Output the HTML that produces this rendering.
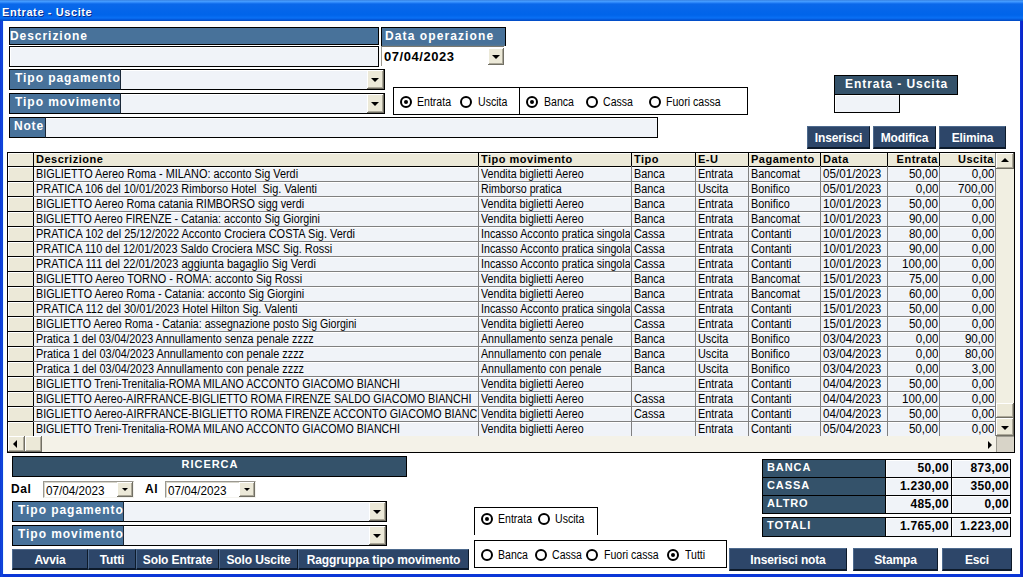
<!DOCTYPE html>
<html><head><meta charset="utf-8">
<style>
*{margin:0;padding:0;box-sizing:border-box}
html,body{width:1023px;height:577px;overflow:hidden;background:#fff;font-family:"Liberation Sans",sans-serif}
.a{position:absolute}
#win{position:absolute;left:0;top:0;width:1023px;height:577px;background:linear-gradient(90deg,#0a3ad6 0,#1448dc 2px,#0a36d6 3px,#0a36d6 1020px,#0d2cd0 1021px,#0a22c8 1023px)}
#title{position:absolute;left:0;top:0;width:1023px;height:21px;background:linear-gradient(#2f74d8 0px,#4aa2ff 1px,#3a92ff 2px,#0a68ea 4px,#0064ea 15px,#0a70f4 18px,#0660e4 19px,#0048c0 21px)}
#title span{position:absolute;left:2px;top:6px;color:#fff;font-weight:bold;font-size:11px;letter-spacing:0.6px;text-shadow:1px 1px 0 #0a2a8a}
#client{position:absolute;left:3px;top:21px;width:1017px;height:553px;background:#fff;border-left:1px solid #e4fbff}
.lbl{position:absolute;background:#48729a;border:1px solid #000;color:#fff;font-weight:bold;font-size:12px;letter-spacing:0.8px;white-space:nowrap;overflow:hidden}
.lbl span{position:absolute;left:4px;top:2px}
.dk{background:#34526a}
.inp{position:absolute;background:#f0f3f8;border:1px solid #000;box-shadow:inset 1px 1px 0 #fff}
.dd{position:absolute;background:#ece9d8;border-right:1px solid #716f64;border-bottom:1px solid #716f64;box-shadow:inset 1px 1px 0 #fff, inset -1px -1px 0 #aca899}
.tri{position:absolute;left:50%;top:50%;margin-left:-4px;margin-top:-1px;width:0;height:0;border-left:4px solid transparent;border-right:4px solid transparent;border-top:4px solid #000}
.rad{position:absolute;width:12px;height:12px;border:2px solid #000;border-radius:50%;background:#fff}
.dot{position:absolute;left:2px;top:2px;width:4px;height:4px;background:#000;border-radius:50%}
.rt{position:absolute;font-size:12px;color:#000;white-space:nowrap;transform:scaleX(0.88);transform-origin:0 0}
.btn{position:absolute;background:#2d4669;color:#fff;font-weight:bold;font-size:12px;text-align:center;white-space:nowrap;border-top:1px solid #4d6a8e;border-left:1px solid #4d6a8e;border-right:1px solid #0d1a2a;border-bottom:2px solid #0d1a2a}
.box{position:absolute;border:1px solid #000;background:#fff}
#grid{position:absolute;left:7px;top:152px;width:1008px;height:301px;border:1px solid #000;background:#ece9d8;overflow:hidden}
.cell{position:absolute;font-size:12px;white-space:nowrap;overflow:hidden;color:#000}
.cell i{font-style:normal;display:inline-block;transform:scaleX(0.906);transform-origin:0 0}
.cell.r i{transform-origin:100% 0}
.hd{position:absolute;font-size:11px;font-weight:bold;letter-spacing:0.5px;white-space:nowrap;overflow:hidden;color:#000}
</style></head><body>
<div id="win">
<div id="title"><span>Entrate - Uscite</span></div>
<div id="client"></div>

<div class="lbl" style="left:9px;top:27px;width:370px;height:18px"><span style="left:0px;top:1px;letter-spacing:0.95px">Descrizione</span></div>
<div class="inp" style="left:9px;top:46px;width:370px;height:21px"></div>
<div class="lbl" style="left:381px;top:27px;width:125px;height:19px;border-bottom:none;background:linear-gradient(#48729a 0,#48729a 16px,#5a7890 18px)"><span style="left:3px;top:1px;letter-spacing:1.1px">Data operazione</span></div>
<div class="a" style="left:381px;top:46px;width:123px;height:20px;background:#fff;border-left:1px solid #9c9a90;border-top:1px solid #7c7a70"></div>
<div class="a" style="left:384px;top:49px;font-weight:bold;font-size:13px;letter-spacing:0.55px">07/04/2023</div>
<div class="dd" style="left:488px;top:48px;width:16px;height:17px"><div class="tri"></div></div>
<div class="inp" style="left:9px;top:69px;width:376px;height:21px"></div>
<div class="lbl" style="left:9px;top:69px;width:112px;height:21px;border-right-color:#1a2838"><span style="left:5px;top:1px;letter-spacing:0.95px">Tipo pagamento</span></div>
<div class="dd" style="left:367px;top:70px;width:17px;height:19px"><div class="tri"></div></div>
<div class="inp" style="left:9px;top:93px;width:376px;height:21px"></div>
<div class="lbl" style="left:9px;top:93px;width:112px;height:21px;border-right-color:#1a2838"><span style="left:5px;top:1px;letter-spacing:0.95px">Tipo movimento</span></div>
<div class="dd" style="left:367px;top:94px;width:17px;height:19px"><div class="tri"></div></div>
<div class="box" style="left:393px;top:87px;width:355px;height:28px"></div>
<div class="a" style="left:519px;top:87px;width:1px;height:28px;background:#000"></div>
<div class="rad" style="left:400px;top:96px"><div class="dot"></div></div>
<div class="rt" style="left:417px;top:95px">Entrata</div>
<div class="rad" style="left:460px;top:96px"></div>
<div class="rt" style="left:478px;top:95px">Uscita</div>
<div class="rad" style="left:526px;top:96px"><div class="dot"></div></div>
<div class="rt" style="left:544px;top:95px">Banca</div>
<div class="rad" style="left:586px;top:96px"></div>
<div class="rt" style="left:603px;top:95px">Cassa</div>
<div class="rad" style="left:649px;top:96px"></div>
<div class="rt" style="left:666px;top:95px">Fuori cassa</div>
<div class="inp" style="left:9px;top:117px;width:649px;height:21px"></div>
<div class="lbl" style="left:9px;top:117px;width:37px;height:21px;border-right-color:#1a2838"><span style="left:4px;top:1px">Note</span></div>
<div class="lbl dk" style="left:834px;top:75px;width:124px;height:20px"><span style="left:10px;top:1px;letter-spacing:0.95px">Entrata - Uscita</span></div>
<div class="inp" style="left:834px;top:94px;width:66px;height:19px"></div>
<div class="btn" style="left:807px;top:126px;width:63px;height:23px;line-height:22px;letter-spacing:-0.15px">Inserisci</div>
<div class="btn" style="left:873px;top:126px;width:63px;height:23px;line-height:22px;letter-spacing:-0.15px">Modifica</div>
<div class="btn" style="left:939px;top:126px;width:67px;height:23px;line-height:22px;letter-spacing:-0.15px">Elimina</div>
<div id="grid">
<div class="a" style="left:26px;top:14px;width:962px;height:269px;background:#f0f3f8"></div>
<div class="a" style="left:0px;top:0px;width:988px;height:13px;background:#ece9d8"></div>
<div class="a" style="left:0px;top:13px;width:988px;height:1px;background:#000"></div>
<div class="a" style="left:0px;top:14px;width:987px;height:1px;background:#fff"></div>
<div class="a" style="left:0px;top:29px;width:987px;height:1px;background:#fff"></div>
<div class="a" style="left:0px;top:44px;width:987px;height:1px;background:#fff"></div>
<div class="a" style="left:0px;top:59px;width:987px;height:1px;background:#fff"></div>
<div class="a" style="left:0px;top:74px;width:987px;height:1px;background:#fff"></div>
<div class="a" style="left:0px;top:89px;width:987px;height:1px;background:#fff"></div>
<div class="a" style="left:0px;top:104px;width:987px;height:1px;background:#fff"></div>
<div class="a" style="left:0px;top:119px;width:987px;height:1px;background:#fff"></div>
<div class="a" style="left:0px;top:134px;width:987px;height:1px;background:#fff"></div>
<div class="a" style="left:0px;top:149px;width:987px;height:1px;background:#fff"></div>
<div class="a" style="left:0px;top:164px;width:987px;height:1px;background:#fff"></div>
<div class="a" style="left:0px;top:179px;width:987px;height:1px;background:#fff"></div>
<div class="a" style="left:0px;top:194px;width:987px;height:1px;background:#fff"></div>
<div class="a" style="left:0px;top:209px;width:987px;height:1px;background:#fff"></div>
<div class="a" style="left:0px;top:224px;width:987px;height:1px;background:#fff"></div>
<div class="a" style="left:0px;top:239px;width:987px;height:1px;background:#fff"></div>
<div class="a" style="left:0px;top:254px;width:987px;height:1px;background:#fff"></div>
<div class="a" style="left:0px;top:269px;width:987px;height:1px;background:#fff"></div>
<div class="a" style="left:0px;top:14px;width:1px;height:269px;background:#fff"></div>
<div class="a" style="left:0px;top:0px;width:1px;height:13px;background:#fff"></div>
<div class="a" style="left:0px;top:0px;width:987px;height:1px;background:#fbfaf4"></div>
<div class="a" style="left:25px;top:0px;width:1px;height:283px;background:#000"></div>
<div class="a" style="left:25px;top:0px;width:1px;height:13px;background:#000"></div>
<div class="a" style="left:470px;top:0px;width:1px;height:283px;background:#808080"></div>
<div class="a" style="left:470px;top:0px;width:1px;height:13px;background:#000"></div>
<div class="a" style="left:623px;top:0px;width:1px;height:283px;background:#808080"></div>
<div class="a" style="left:623px;top:0px;width:1px;height:13px;background:#000"></div>
<div class="a" style="left:687px;top:0px;width:1px;height:283px;background:#808080"></div>
<div class="a" style="left:687px;top:0px;width:1px;height:13px;background:#000"></div>
<div class="a" style="left:740px;top:0px;width:1px;height:283px;background:#808080"></div>
<div class="a" style="left:740px;top:0px;width:1px;height:13px;background:#000"></div>
<div class="a" style="left:812px;top:0px;width:1px;height:283px;background:#808080"></div>
<div class="a" style="left:812px;top:0px;width:1px;height:13px;background:#000"></div>
<div class="a" style="left:879px;top:0px;width:1px;height:283px;background:#808080"></div>
<div class="a" style="left:879px;top:0px;width:1px;height:13px;background:#000"></div>
<div class="a" style="left:931px;top:0px;width:1px;height:283px;background:#808080"></div>
<div class="a" style="left:931px;top:0px;width:1px;height:13px;background:#000"></div>
<div class="a" style="left:987px;top:0px;width:1px;height:283px;background:#808080"></div>
<div class="a" style="left:25px;top:28px;width:963px;height:1px;background:#808080"></div>
<div class="a" style="left:0px;top:28px;width:25px;height:1px;background:#000"></div>
<div class="a" style="left:25px;top:43px;width:963px;height:1px;background:#808080"></div>
<div class="a" style="left:0px;top:43px;width:25px;height:1px;background:#000"></div>
<div class="a" style="left:25px;top:58px;width:963px;height:1px;background:#808080"></div>
<div class="a" style="left:0px;top:58px;width:25px;height:1px;background:#000"></div>
<div class="a" style="left:25px;top:73px;width:963px;height:1px;background:#808080"></div>
<div class="a" style="left:0px;top:73px;width:25px;height:1px;background:#000"></div>
<div class="a" style="left:25px;top:88px;width:963px;height:1px;background:#808080"></div>
<div class="a" style="left:0px;top:88px;width:25px;height:1px;background:#000"></div>
<div class="a" style="left:25px;top:103px;width:963px;height:1px;background:#808080"></div>
<div class="a" style="left:0px;top:103px;width:25px;height:1px;background:#000"></div>
<div class="a" style="left:25px;top:118px;width:963px;height:1px;background:#808080"></div>
<div class="a" style="left:0px;top:118px;width:25px;height:1px;background:#000"></div>
<div class="a" style="left:25px;top:133px;width:963px;height:1px;background:#808080"></div>
<div class="a" style="left:0px;top:133px;width:25px;height:1px;background:#000"></div>
<div class="a" style="left:25px;top:148px;width:963px;height:1px;background:#808080"></div>
<div class="a" style="left:0px;top:148px;width:25px;height:1px;background:#000"></div>
<div class="a" style="left:25px;top:163px;width:963px;height:1px;background:#808080"></div>
<div class="a" style="left:0px;top:163px;width:25px;height:1px;background:#000"></div>
<div class="a" style="left:25px;top:178px;width:963px;height:1px;background:#808080"></div>
<div class="a" style="left:0px;top:178px;width:25px;height:1px;background:#000"></div>
<div class="a" style="left:25px;top:193px;width:963px;height:1px;background:#808080"></div>
<div class="a" style="left:0px;top:193px;width:25px;height:1px;background:#000"></div>
<div class="a" style="left:25px;top:208px;width:963px;height:1px;background:#808080"></div>
<div class="a" style="left:0px;top:208px;width:25px;height:1px;background:#000"></div>
<div class="a" style="left:25px;top:223px;width:963px;height:1px;background:#808080"></div>
<div class="a" style="left:0px;top:223px;width:25px;height:1px;background:#000"></div>
<div class="a" style="left:25px;top:238px;width:963px;height:1px;background:#808080"></div>
<div class="a" style="left:0px;top:238px;width:25px;height:1px;background:#000"></div>
<div class="a" style="left:25px;top:253px;width:963px;height:1px;background:#808080"></div>
<div class="a" style="left:0px;top:253px;width:25px;height:1px;background:#000"></div>
<div class="a" style="left:25px;top:268px;width:963px;height:1px;background:#808080"></div>
<div class="a" style="left:0px;top:268px;width:25px;height:1px;background:#000"></div>
<div class="hd" style="left:28px;top:0px;width:441px">Descrizione</div>
<div class="hd" style="left:473px;top:0px;width:149px">Tipo movimento</div>
<div class="hd" style="left:626px;top:0px;width:60px">Tipo</div>
<div class="hd" style="left:690px;top:0px;width:49px">E-U</div>
<div class="hd" style="left:743px;top:0px;width:68px">Pagamento</div>
<div class="hd" style="left:815px;top:0px;width:63px">Data</div>
<div class="hd" style="left:880px;top:0px;width:50px;text-align:right">Entrata</div>
<div class="hd" style="left:932px;top:0px;width:54px;text-align:right">Uscita</div>
<div class="cell" style="left:28px;top:14px;width:441px"><i style="transform:scaleX(0.906)">BIGLIETTO Aereo Roma - MILANO: acconto Sig Verdi</i></div>
<div class="cell" style="left:473px;top:14px;width:149px"><i style="transform:scaleX(0.89)">Vendita biglietti Aereo</i></div>
<div class="cell" style="left:626px;top:14px;width:60px"><i>Banca</i></div>
<div class="cell" style="left:690px;top:14px;width:49px"><i>Entrata</i></div>
<div class="cell" style="left:743px;top:14px;width:68px"><i>Bancomat</i></div>
<div class="cell" style="left:815px;top:14px;width:63px"><i style="transform:scaleX(0.97)">05/01/2023</i></div>
<div class="cell r" style="left:880px;top:14px;width:50px;text-align:right"><i style="transform:scaleX(0.97)">50,00</i></div>
<div class="cell r" style="left:932px;top:14px;width:54px;text-align:right"><i style="transform:scaleX(0.97)">0,00</i></div>
<div class="cell" style="left:28px;top:29px;width:441px"><i style="transform:scaleX(0.909)">PRATICA 106 del 10/01/2023 Rimborso Hotel&nbsp; Sig. Valenti</i></div>
<div class="cell" style="left:473px;top:29px;width:149px"><i style="transform:scaleX(0.89)">Rimborso pratica</i></div>
<div class="cell" style="left:626px;top:29px;width:60px"><i>Banca</i></div>
<div class="cell" style="left:690px;top:29px;width:49px"><i>Uscita</i></div>
<div class="cell" style="left:743px;top:29px;width:68px"><i>Bonifico</i></div>
<div class="cell" style="left:815px;top:29px;width:63px"><i style="transform:scaleX(0.97)">05/01/2023</i></div>
<div class="cell r" style="left:880px;top:29px;width:50px;text-align:right"><i style="transform:scaleX(0.97)">0,00</i></div>
<div class="cell r" style="left:932px;top:29px;width:54px;text-align:right"><i style="transform:scaleX(0.97)">700,00</i></div>
<div class="cell" style="left:28px;top:44px;width:441px"><i style="transform:scaleX(0.900)">BIGLIETTO Aereo Roma catania RIMBORSO sigg verdi</i></div>
<div class="cell" style="left:473px;top:44px;width:149px"><i style="transform:scaleX(0.89)">Vendita biglietti Aereo</i></div>
<div class="cell" style="left:626px;top:44px;width:60px"><i>Banca</i></div>
<div class="cell" style="left:690px;top:44px;width:49px"><i>Entrata</i></div>
<div class="cell" style="left:743px;top:44px;width:68px"><i>Bonifico</i></div>
<div class="cell" style="left:815px;top:44px;width:63px"><i style="transform:scaleX(0.97)">10/01/2023</i></div>
<div class="cell r" style="left:880px;top:44px;width:50px;text-align:right"><i style="transform:scaleX(0.97)">50,00</i></div>
<div class="cell r" style="left:932px;top:44px;width:54px;text-align:right"><i style="transform:scaleX(0.97)">0,00</i></div>
<div class="cell" style="left:28px;top:59px;width:441px"><i style="transform:scaleX(0.893)">BIGLIETTO Aereo FIRENZE - Catania: acconto Sig Giorgini</i></div>
<div class="cell" style="left:473px;top:59px;width:149px"><i style="transform:scaleX(0.89)">Vendita biglietti Aereo</i></div>
<div class="cell" style="left:626px;top:59px;width:60px"><i>Banca</i></div>
<div class="cell" style="left:690px;top:59px;width:49px"><i>Entrata</i></div>
<div class="cell" style="left:743px;top:59px;width:68px"><i>Bancomat</i></div>
<div class="cell" style="left:815px;top:59px;width:63px"><i style="transform:scaleX(0.97)">10/01/2023</i></div>
<div class="cell r" style="left:880px;top:59px;width:50px;text-align:right"><i style="transform:scaleX(0.97)">90,00</i></div>
<div class="cell r" style="left:932px;top:59px;width:54px;text-align:right"><i style="transform:scaleX(0.97)">0,00</i></div>
<div class="cell" style="left:28px;top:74px;width:441px"><i style="transform:scaleX(0.914)">PRATICA 102 del 25/12/2022 Acconto Crociera COSTA Sig. Verdi</i></div>
<div class="cell" style="left:473px;top:74px;width:149px"><i style="transform:scaleX(0.89)">Incasso Acconto pratica singola</i></div>
<div class="cell" style="left:626px;top:74px;width:60px"><i>Cassa</i></div>
<div class="cell" style="left:690px;top:74px;width:49px"><i>Entrata</i></div>
<div class="cell" style="left:743px;top:74px;width:68px"><i>Contanti</i></div>
<div class="cell" style="left:815px;top:74px;width:63px"><i style="transform:scaleX(0.97)">10/01/2023</i></div>
<div class="cell r" style="left:880px;top:74px;width:50px;text-align:right"><i style="transform:scaleX(0.97)">80,00</i></div>
<div class="cell r" style="left:932px;top:74px;width:54px;text-align:right"><i style="transform:scaleX(0.97)">0,00</i></div>
<div class="cell" style="left:28px;top:89px;width:441px"><i style="transform:scaleX(0.909)">PRATICA 110 del 12/01/2023 Saldo Crociera MSC Sig. Rossi</i></div>
<div class="cell" style="left:473px;top:89px;width:149px"><i style="transform:scaleX(0.89)">Incasso Acconto pratica singola</i></div>
<div class="cell" style="left:626px;top:89px;width:60px"><i>Cassa</i></div>
<div class="cell" style="left:690px;top:89px;width:49px"><i>Entrata</i></div>
<div class="cell" style="left:743px;top:89px;width:68px"><i>Contanti</i></div>
<div class="cell" style="left:815px;top:89px;width:63px"><i style="transform:scaleX(0.97)">10/01/2023</i></div>
<div class="cell r" style="left:880px;top:89px;width:50px;text-align:right"><i style="transform:scaleX(0.97)">90,00</i></div>
<div class="cell r" style="left:932px;top:89px;width:54px;text-align:right"><i style="transform:scaleX(0.97)">0,00</i></div>
<div class="cell" style="left:28px;top:104px;width:441px"><i style="transform:scaleX(0.920)">PRATICA 111 del 22/01/2023 aggiunta bagaglio Sig Verdi</i></div>
<div class="cell" style="left:473px;top:104px;width:149px"><i style="transform:scaleX(0.89)">Incasso Acconto pratica singola</i></div>
<div class="cell" style="left:626px;top:104px;width:60px"><i>Cassa</i></div>
<div class="cell" style="left:690px;top:104px;width:49px"><i>Entrata</i></div>
<div class="cell" style="left:743px;top:104px;width:68px"><i>Contanti</i></div>
<div class="cell" style="left:815px;top:104px;width:63px"><i style="transform:scaleX(0.97)">10/01/2023</i></div>
<div class="cell r" style="left:880px;top:104px;width:50px;text-align:right"><i style="transform:scaleX(0.97)">100,00</i></div>
<div class="cell r" style="left:932px;top:104px;width:54px;text-align:right"><i style="transform:scaleX(0.97)">0,00</i></div>
<div class="cell" style="left:28px;top:119px;width:441px"><i style="transform:scaleX(0.909)">BIGLIETTO Aereo TORNO - ROMA: acconto Sig Rossi</i></div>
<div class="cell" style="left:473px;top:119px;width:149px"><i style="transform:scaleX(0.89)">Vendita biglietti Aereo</i></div>
<div class="cell" style="left:626px;top:119px;width:60px"><i>Banca</i></div>
<div class="cell" style="left:690px;top:119px;width:49px"><i>Entrata</i></div>
<div class="cell" style="left:743px;top:119px;width:68px"><i>Bancomat</i></div>
<div class="cell" style="left:815px;top:119px;width:63px"><i style="transform:scaleX(0.97)">15/01/2023</i></div>
<div class="cell r" style="left:880px;top:119px;width:50px;text-align:right"><i style="transform:scaleX(0.97)">75,00</i></div>
<div class="cell r" style="left:932px;top:119px;width:54px;text-align:right"><i style="transform:scaleX(0.97)">0,00</i></div>
<div class="cell" style="left:28px;top:134px;width:441px"><i style="transform:scaleX(0.898)">BIGLIETTO Aereo Roma - Catania: acconto Sig Giorgini</i></div>
<div class="cell" style="left:473px;top:134px;width:149px"><i style="transform:scaleX(0.89)">Vendita biglietti Aereo</i></div>
<div class="cell" style="left:626px;top:134px;width:60px"><i>Banca</i></div>
<div class="cell" style="left:690px;top:134px;width:49px"><i>Entrata</i></div>
<div class="cell" style="left:743px;top:134px;width:68px"><i>Bancomat</i></div>
<div class="cell" style="left:815px;top:134px;width:63px"><i style="transform:scaleX(0.97)">15/01/2023</i></div>
<div class="cell r" style="left:880px;top:134px;width:50px;text-align:right"><i style="transform:scaleX(0.97)">60,00</i></div>
<div class="cell r" style="left:932px;top:134px;width:54px;text-align:right"><i style="transform:scaleX(0.97)">0,00</i></div>
<div class="cell" style="left:28px;top:149px;width:441px"><i style="transform:scaleX(0.920)">PRATICA 112 del 30/01/2023 Hotel Hilton Sig. Valenti</i></div>
<div class="cell" style="left:473px;top:149px;width:149px"><i style="transform:scaleX(0.89)">Incasso Acconto pratica singola</i></div>
<div class="cell" style="left:626px;top:149px;width:60px"><i>Cassa</i></div>
<div class="cell" style="left:690px;top:149px;width:49px"><i>Entrata</i></div>
<div class="cell" style="left:743px;top:149px;width:68px"><i>Contanti</i></div>
<div class="cell" style="left:815px;top:149px;width:63px"><i style="transform:scaleX(0.97)">15/01/2023</i></div>
<div class="cell r" style="left:880px;top:149px;width:50px;text-align:right"><i style="transform:scaleX(0.97)">50,00</i></div>
<div class="cell r" style="left:932px;top:149px;width:54px;text-align:right"><i style="transform:scaleX(0.97)">0,00</i></div>
<div class="cell" style="left:28px;top:164px;width:441px"><i style="transform:scaleX(0.882)">BIGLIETTO Aereo Roma - Catania: assegnazione posto Sig Giorgini</i></div>
<div class="cell" style="left:473px;top:164px;width:149px"><i style="transform:scaleX(0.89)">Vendita biglietti Aereo</i></div>
<div class="cell" style="left:626px;top:164px;width:60px"><i>Cassa</i></div>
<div class="cell" style="left:690px;top:164px;width:49px"><i>Entrata</i></div>
<div class="cell" style="left:743px;top:164px;width:68px"><i>Contanti</i></div>
<div class="cell" style="left:815px;top:164px;width:63px"><i style="transform:scaleX(0.97)">15/01/2023</i></div>
<div class="cell r" style="left:880px;top:164px;width:50px;text-align:right"><i style="transform:scaleX(0.97)">50,00</i></div>
<div class="cell r" style="left:932px;top:164px;width:54px;text-align:right"><i style="transform:scaleX(0.97)">0,00</i></div>
<div class="cell" style="left:28px;top:179px;width:441px"><i style="transform:scaleX(0.901)">Pratica 1 del 03/04/2023 Annullamento senza penale zzzz</i></div>
<div class="cell" style="left:473px;top:179px;width:149px"><i style="transform:scaleX(0.89)">Annullamento senza penale</i></div>
<div class="cell" style="left:626px;top:179px;width:60px"><i>Banca</i></div>
<div class="cell" style="left:690px;top:179px;width:49px"><i>Uscita</i></div>
<div class="cell" style="left:743px;top:179px;width:68px"><i>Bonifico</i></div>
<div class="cell" style="left:815px;top:179px;width:63px"><i style="transform:scaleX(0.97)">03/04/2023</i></div>
<div class="cell r" style="left:880px;top:179px;width:50px;text-align:right"><i style="transform:scaleX(0.97)">0,00</i></div>
<div class="cell r" style="left:932px;top:179px;width:54px;text-align:right"><i style="transform:scaleX(0.97)">90,00</i></div>
<div class="cell" style="left:28px;top:194px;width:441px"><i style="transform:scaleX(0.907)">Pratica 1 del 03/04/2023 Annullamento con penale zzzz</i></div>
<div class="cell" style="left:473px;top:194px;width:149px"><i style="transform:scaleX(0.89)">Annullamento con penale</i></div>
<div class="cell" style="left:626px;top:194px;width:60px"><i>Banca</i></div>
<div class="cell" style="left:690px;top:194px;width:49px"><i>Uscita</i></div>
<div class="cell" style="left:743px;top:194px;width:68px"><i>Bonifico</i></div>
<div class="cell" style="left:815px;top:194px;width:63px"><i style="transform:scaleX(0.97)">03/04/2023</i></div>
<div class="cell r" style="left:880px;top:194px;width:50px;text-align:right"><i style="transform:scaleX(0.97)">0,00</i></div>
<div class="cell r" style="left:932px;top:194px;width:54px;text-align:right"><i style="transform:scaleX(0.97)">80,00</i></div>
<div class="cell" style="left:28px;top:209px;width:441px"><i style="transform:scaleX(0.907)">Pratica 1 del 03/04/2023 Annullamento con penale zzzz</i></div>
<div class="cell" style="left:473px;top:209px;width:149px"><i style="transform:scaleX(0.89)">Annullamento con penale</i></div>
<div class="cell" style="left:626px;top:209px;width:60px"><i>Banca</i></div>
<div class="cell" style="left:690px;top:209px;width:49px"><i>Uscita</i></div>
<div class="cell" style="left:743px;top:209px;width:68px"><i>Bonifico</i></div>
<div class="cell" style="left:815px;top:209px;width:63px"><i style="transform:scaleX(0.97)">03/04/2023</i></div>
<div class="cell r" style="left:880px;top:209px;width:50px;text-align:right"><i style="transform:scaleX(0.97)">0,00</i></div>
<div class="cell r" style="left:932px;top:209px;width:54px;text-align:right"><i style="transform:scaleX(0.97)">3,00</i></div>
<div class="cell" style="left:28px;top:224px;width:441px"><i style="transform:scaleX(0.888)">BIGLIETTO Treni-Trenitalia-ROMA MILANO ACCONTO GIACOMO BIANCHI</i></div>
<div class="cell" style="left:473px;top:224px;width:149px"><i style="transform:scaleX(0.89)">Vendita biglietti Aereo</i></div>
<div class="cell" style="left:626px;top:224px;width:60px"><i></i></div>
<div class="cell" style="left:690px;top:224px;width:49px"><i>Entrata</i></div>
<div class="cell" style="left:743px;top:224px;width:68px"><i>Contanti</i></div>
<div class="cell" style="left:815px;top:224px;width:63px"><i style="transform:scaleX(0.97)">04/04/2023</i></div>
<div class="cell r" style="left:880px;top:224px;width:50px;text-align:right"><i style="transform:scaleX(0.97)">50,00</i></div>
<div class="cell r" style="left:932px;top:224px;width:54px;text-align:right"><i style="transform:scaleX(0.97)">0,00</i></div>
<div class="cell" style="left:28px;top:239px;width:441px"><i style="transform:scaleX(0.893)">BIGLIETTO Aereo-AIRFRANCE-BIGLIETTO ROMA FIRENZE SALDO GIACOMO BIANCHI</i></div>
<div class="cell" style="left:473px;top:239px;width:149px"><i style="transform:scaleX(0.89)">Vendita biglietti Aereo</i></div>
<div class="cell" style="left:626px;top:239px;width:60px"><i>Cassa</i></div>
<div class="cell" style="left:690px;top:239px;width:49px"><i>Entrata</i></div>
<div class="cell" style="left:743px;top:239px;width:68px"><i>Contanti</i></div>
<div class="cell" style="left:815px;top:239px;width:63px"><i style="transform:scaleX(0.97)">04/04/2023</i></div>
<div class="cell r" style="left:880px;top:239px;width:50px;text-align:right"><i style="transform:scaleX(0.97)">100,00</i></div>
<div class="cell r" style="left:932px;top:239px;width:54px;text-align:right"><i style="transform:scaleX(0.97)">0,00</i></div>
<div class="cell" style="left:28px;top:254px;width:441px"><i style="transform:scaleX(0.893)">BIGLIETTO Aereo-AIRFRANCE-BIGLIETTO ROMA FIRENZE ACCONTO GIACOMO BIANCHI</i></div>
<div class="cell" style="left:473px;top:254px;width:149px"><i style="transform:scaleX(0.89)">Vendita biglietti Aereo</i></div>
<div class="cell" style="left:626px;top:254px;width:60px"><i>Cassa</i></div>
<div class="cell" style="left:690px;top:254px;width:49px"><i>Entrata</i></div>
<div class="cell" style="left:743px;top:254px;width:68px"><i>Contanti</i></div>
<div class="cell" style="left:815px;top:254px;width:63px"><i style="transform:scaleX(0.97)">04/04/2023</i></div>
<div class="cell r" style="left:880px;top:254px;width:50px;text-align:right"><i style="transform:scaleX(0.97)">50,00</i></div>
<div class="cell r" style="left:932px;top:254px;width:54px;text-align:right"><i style="transform:scaleX(0.97)">0,00</i></div>
<div class="cell" style="left:28px;top:269px;width:441px"><i style="transform:scaleX(0.888)">BIGLIETTO Treni-Trenitalia-ROMA MILANO ACCONTO GIACOMO BIANCHI</i></div>
<div class="cell" style="left:473px;top:269px;width:149px"><i style="transform:scaleX(0.89)">Vendita biglietti Aereo</i></div>
<div class="cell" style="left:626px;top:269px;width:60px"><i></i></div>
<div class="cell" style="left:690px;top:269px;width:49px"><i>Entrata</i></div>
<div class="cell" style="left:743px;top:269px;width:68px"><i>Contanti</i></div>
<div class="cell" style="left:815px;top:269px;width:63px"><i style="transform:scaleX(0.97)">05/04/2023</i></div>
<div class="cell r" style="left:880px;top:269px;width:50px;text-align:right"><i style="transform:scaleX(0.97)">50,00</i></div>
<div class="cell r" style="left:932px;top:269px;width:54px;text-align:right"><i style="transform:scaleX(0.97)">0,00</i></div>
<div class="a" style="left:988px;top:0px;width:18px;height:283px;background:#f1efe2"></div>
<div class="dd" style="left:988px;top:0px;width:18px;height:16px"><div class="tri" style="border-top:none;border-bottom:4px solid #000;margin-top:-3px"></div></div>
<div class="dd" style="left:988px;top:250px;width:18px;height:15px"></div>
<div class="dd" style="left:988px;top:265px;width:18px;height:18px"><div class="tri"></div></div>
<div class="a" style="left:0px;top:283px;width:988px;height:16px;background:#f4f2e8"></div>
<div class="dd" style="left:0px;top:283px;width:17px;height:16px"><div class="a" style="left:5px;top:4px;width:0;height:0;border-top:4px solid transparent;border-bottom:4px solid transparent;border-right:4px solid #000"></div></div>
<div class="dd" style="left:17px;top:283px;width:17px;height:16px"></div>
<div class="a" style="left:980px;top:288px;width:0;height:0;border-top:4px solid transparent;border-bottom:4px solid transparent;border-left:4px solid #000"></div>
<div class="a" style="left:988px;top:283px;width:18px;height:16px;background:#d8d4c8;border-left:1px solid #9c9a90;border-top:1px solid #9c9a90"></div>
</div>
<div class="lbl dk" style="left:12px;top:456px;width:395px;height:21px;text-align:center;font-size:11px;letter-spacing:0.95px"><span style="position:static;display:block;padding-top:1px;padding-left:1px">RICERCA</span></div>
<div class="a" style="left:11px;top:482px;font-weight:bold;font-size:12px;letter-spacing:0.6px">Dal</div>
<div class="a" style="left:145px;top:482px;font-weight:bold;font-size:12px;letter-spacing:0.6px">Al</div>
<div class="a" style="left:43px;top:481px;width:91px;height:17px;background:#fff;border-left:1px solid #9a9890;border-top:1px solid #9a9890;border-right:1px solid #f4f3ee;border-bottom:1px solid #f4f3ee;box-shadow:inset 1px 1px 0 #d8d6cc"></div>
<div class="a" style="left:46px;top:483px;font-size:13px;transform:scaleX(0.9);transform-origin:0 0">07/04/2023</div>
<div class="dd" style="left:117px;top:482px;width:16px;height:15px"><div class="tri" style="border-left-width:3px;border-right-width:3px;border-top-width:3px;margin-left:-3px"></div></div>
<div class="a" style="left:165px;top:481px;width:91px;height:17px;background:#fff;border-left:1px solid #9a9890;border-top:1px solid #9a9890;border-right:1px solid #f4f3ee;border-bottom:1px solid #f4f3ee;box-shadow:inset 1px 1px 0 #d8d6cc"></div>
<div class="a" style="left:168px;top:483px;font-size:13px;transform:scaleX(0.9);transform-origin:0 0">07/04/2023</div>
<div class="dd" style="left:239px;top:482px;width:16px;height:15px"><div class="tri" style="border-left-width:3px;border-right-width:3px;border-top-width:3px;margin-left:-3px"></div></div>
<div class="inp" style="left:12px;top:501px;width:375px;height:21px"></div>
<div class="lbl" style="left:12px;top:501px;width:112px;height:21px;border-right-color:#1a2838"><span style="left:5px;top:1px;letter-spacing:0.95px">Tipo pagamento</span></div>
<div class="dd" style="left:369px;top:502px;width:17px;height:19px"><div class="tri"></div></div>
<div class="inp" style="left:12px;top:525px;width:375px;height:21px"></div>
<div class="lbl" style="left:12px;top:525px;width:112px;height:21px;border-right-color:#1a2838"><span style="left:5px;top:1px;letter-spacing:0.95px">Tipo movimento</span></div>
<div class="dd" style="left:369px;top:526px;width:17px;height:19px"><div class="tri"></div></div>
<div class="btn" style="left:12px;top:549px;width:76px;height:21px;line-height:20px;letter-spacing:-0.1px">Avvia</div>
<div class="btn" style="left:88px;top:549px;width:48px;height:21px;line-height:20px;letter-spacing:-0.1px">Tutti</div>
<div class="btn" style="left:136px;top:549px;width:83px;height:21px;line-height:20px;letter-spacing:-0.1px">Solo Entrate</div>
<div class="btn" style="left:219px;top:549px;width:79px;height:21px;line-height:20px;letter-spacing:-0.1px">Solo Uscite</div>
<div class="btn" style="left:298px;top:549px;width:171px;height:21px;line-height:20px;letter-spacing:-0.1px">Raggruppa tipo movimento</div>
<div class="a" style="left:474px;top:507px;width:124px;height:28px;border:1px solid #000;border-bottom:none;background:#fff"></div>
<div class="rad" style="left:481px;top:513px"><div class="dot"></div></div>
<div class="rt" style="left:498px;top:512px">Entrata</div>
<div class="rad" style="left:538px;top:513px"></div>
<div class="rt" style="left:555px;top:512px">Uscita</div>
<div class="box" style="left:474px;top:540px;width:253px;height:28px"></div>
<div class="rad" style="left:481px;top:549px"></div>
<div class="rt" style="left:498px;top:548px">Banca</div>
<div class="rad" style="left:535px;top:549px"></div>
<div class="rt" style="left:552px;top:548px">Cassa</div>
<div class="rad" style="left:586px;top:549px"></div>
<div class="rt" style="left:604px;top:548px">Fuori cassa</div>
<div class="rad" style="left:667px;top:549px"><div class="dot"></div></div>
<div class="rt" style="left:685px;top:548px">Tutti</div>
<div class="lbl dk" style="left:762px;top:459px;width:124px;height:19px;font-size:11px;letter-spacing:0.9px"><span style="left:4px;top:1px">BANCA</span></div>
<div class="inp" style="left:885px;top:459px;width:67px;height:19px"></div>
<div class="inp" style="left:951px;top:459px;width:60px;height:19px"></div>
<div class="a" style="left:886px;top:461px;width:63px;text-align:right;font-weight:bold;font-size:12px;letter-spacing:0.3px">50,00</div>
<div class="a" style="left:951px;top:461px;width:58px;text-align:right;font-weight:bold;font-size:12px;letter-spacing:0.3px">873,00</div>
<div class="lbl dk" style="left:762px;top:477px;width:124px;height:19px;font-size:11px;letter-spacing:0.9px"><span style="left:4px;top:1px">CASSA</span></div>
<div class="inp" style="left:885px;top:477px;width:67px;height:19px"></div>
<div class="inp" style="left:951px;top:477px;width:60px;height:19px"></div>
<div class="a" style="left:886px;top:479px;width:63px;text-align:right;font-weight:bold;font-size:12px;letter-spacing:0.3px">1.230,00</div>
<div class="a" style="left:951px;top:479px;width:58px;text-align:right;font-weight:bold;font-size:12px;letter-spacing:0.3px">350,00</div>
<div class="lbl dk" style="left:762px;top:495px;width:124px;height:19px;font-size:11px;letter-spacing:0.9px"><span style="left:4px;top:1px">ALTRO</span></div>
<div class="inp" style="left:885px;top:495px;width:67px;height:19px"></div>
<div class="inp" style="left:951px;top:495px;width:60px;height:19px"></div>
<div class="a" style="left:886px;top:497px;width:63px;text-align:right;font-weight:bold;font-size:12px;letter-spacing:0.3px">485,00</div>
<div class="a" style="left:951px;top:497px;width:58px;text-align:right;font-weight:bold;font-size:12px;letter-spacing:0.3px">0,00</div>
<div class="lbl dk" style="left:762px;top:517px;width:124px;height:20px;font-size:11px;letter-spacing:0.9px"><span style="left:4px;top:1px">TOTALI</span></div>
<div class="inp" style="left:885px;top:517px;width:67px;height:20px"></div>
<div class="inp" style="left:951px;top:517px;width:60px;height:20px"></div>
<div class="a" style="left:886px;top:519px;width:63px;text-align:right;font-weight:bold;font-size:12px;letter-spacing:0.3px">1.765,00</div>
<div class="a" style="left:951px;top:519px;width:58px;text-align:right;font-weight:bold;font-size:12px;letter-spacing:0.3px">1.223,00</div>
<div class="btn" style="left:729px;top:548px;width:118px;height:23px;line-height:22px;letter-spacing:-0.15px">Inserisci nota</div>
<div class="btn" style="left:853px;top:548px;width:85px;height:23px;line-height:22px;letter-spacing:-0.15px">Stampa</div>
<div class="btn" style="left:942px;top:548px;width:70px;height:23px;line-height:22px;letter-spacing:-0.15px">Esci</div>
</div></body></html>
